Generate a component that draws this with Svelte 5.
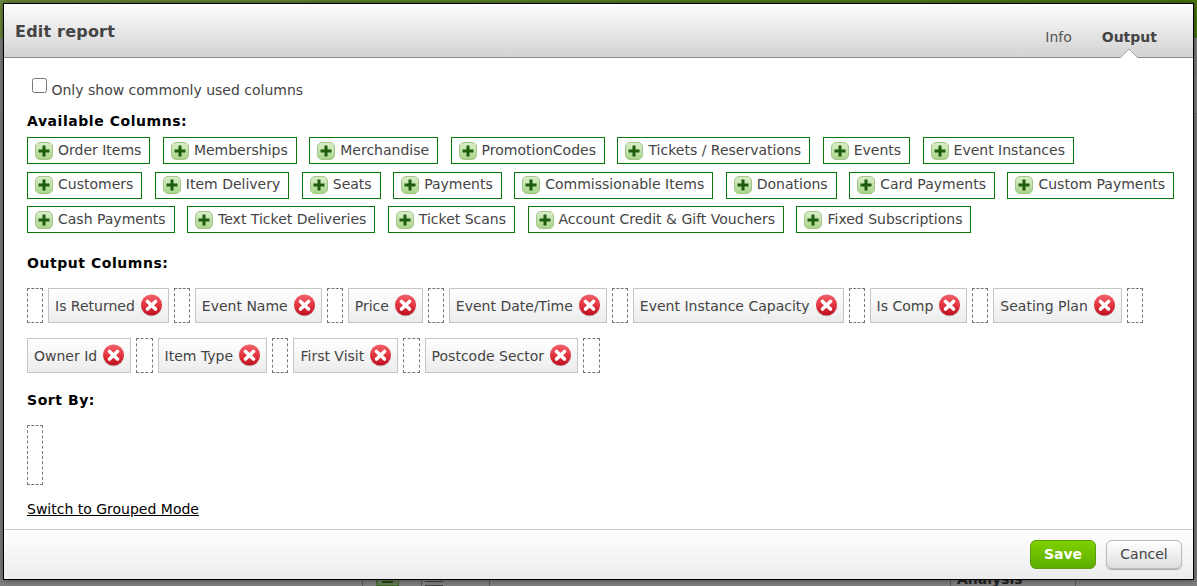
<script>
  const available = [
    ['Order Items', 'Memberships', 'Merchandise', 'PromotionCodes', 'Tickets / Reservations', 'Events', 'Event Instances'],
    ['Customers', 'Item Delivery', 'Seats', 'Payments', 'Commissionable Items', 'Donations', 'Card Payments', 'Custom Payments'],
    ['Cash Payments', 'Text Ticket Deliveries', 'Ticket Scans', 'Account Credit & Gift Vouchers', 'Fixed Subscriptions']
  ];
  const output = [
    ['Is Returned', 'Event Name', 'Price', 'Event Date/Time', 'Event Instance Capacity', 'Is Comp', 'Seating Plan'],
    ['Owner Id', 'Item Type', 'First Visit', 'Postcode Sector']
  ];
</script>

<div class="page">
  <div class="backdrop">
    <div class="strip-plus"></div>
    <div class="strip-lines"></div>
    <div class="strip-rule a"></div>
    <div class="strip-rule b"></div>
    <div class="strip-rule c"></div>
    <div class="strip-rule d"></div>
    <div class="strip-rule e"></div>
    <span class="strip-text">Analysis</span>
  </div>
  <div class="modal">
    <header>
      <h1>Edit report</h1>
      <nav>
        <span class="tab">Info</span>
        <span class="tab active">Output</span>
      </nav>
      <svg class="caret" width="20" height="10" viewBox="0 0 20 10"><path d="M1 10 L10 1 L19 10" fill="#fff" stroke="#a8a8a8" stroke-width="1"/></svg>
    </header>
    <main>
      <label class="check"><input type="checkbox" /> Only show commonly used columns</label>
      <h2 class="first">Available Columns:</h2>
      <div class="avail">
        {#each available as row}
          <div class="row">
            {#each row as name}
              <span class="add">
                <svg width="18" height="18" viewBox="0 0 18 18">
                  <defs><linearGradient id="gg" x1="0" y1="0" x2="0" y2="1"><stop offset="0" stop-color="#dcefcb"/><stop offset="1" stop-color="#a9d488"/></linearGradient></defs>
                  <rect x="0.5" y="0.5" width="17" height="17" rx="4.5" fill="url(#gg)" stroke="#a3c48c"/>
                  <path d="M9 3.5v11M3.5 9h11" stroke="#1c5c0c" stroke-width="3"/>
                </svg><span class="label">{name}</span>
              </span>
            {/each}
          </div>
        {/each}
      </div>
      <h2 class="second">Output Columns:</h2>
      <div class="outs">
        {#each output as row}
          <div class="out-row" class:long={row.length === 7}>
            {#each row as name, i}
              {#if row.length === 7 && i === 0}<span class="drop"></span>{/if}
              <span class="col">{name}
                <svg width="23" height="23" viewBox="0 0 23 23">
                  <defs>
                    <linearGradient id="rg" x1="0" y1="0" x2="0" y2="1"><stop offset="0" stop-color="#f4626c"/><stop offset="0.55" stop-color="#e0303c"/><stop offset="1" stop-color="#bd0f1e"/></linearGradient>
                  </defs>
                  <circle cx="11.5" cy="12" r="10.5" fill="#000" opacity=".15"/>
                  <circle cx="11.5" cy="11" r="10.5" fill="url(#rg)"/>
                  <path d="M7.5 7.5l8 7.5M15.5 7.5l-8 7.5" stroke="#fff" stroke-width="3.6" stroke-linecap="round"/>
                </svg>
              </span>
              <span class="drop"></span>
            {/each}
          </div>
        {/each}
      </div>
      <h2 class="third">Sort By:</h2>
      <div class="sort"></div>
      <a href="#switch" class="switch">Switch to Grouped Mode</a>
    </main>
    <footer>
      <button class="save">Save</button>
      <button class="cancel">Cancel</button>
    </footer>
  </div>
</div>

<style>
  :global(body) { margin: 0; }
  .page {
    width: 1197px; height: 586px; box-sizing: border-box; position: relative; overflow: hidden;
    padding: 3px 3px 6px 3px;
    font-family: "DejaVu Sans", Verdana, sans-serif; font-size: 14px; color: #333;
    background:
      linear-gradient(#808080 0, #808080 37px, #707070 37px, #858585 38px, #858585 75px, #666 75px, #7f7f7f 76px) 0 38px / 100% 100% no-repeat,
      linear-gradient(to right, #6a8a3c, #4c7510);
  }
  .backdrop { position: absolute; left: 0; right: 0; bottom: 0; height: 7px; background: #7f7f7f; }
  .strip-plus { position: absolute; left: 376px; top: 0; width: 23px; height: 7px; background: #687a5c; border: 1px solid #3c6a20; border-top: 0; box-sizing: border-box; }
  .strip-plus::after { content: ""; position: absolute; left: 5px; top: 2px; width: 11px; height: 2px; background: #1f4a0c; }
  .strip-lines { position: absolute; left: 425px; top: 2px; width: 18px; height: 3px; border-top: 1px solid #444; border-bottom: 1px solid #444; }
  .strip-rule { position: absolute; top: 0; width: 1px; height: 7px; background: #5a5a5a; }
  .strip-rule.a { left: 362px; } .strip-rule.b { left: 421px; } .strip-rule.c { left: 489px; } .strip-rule.d { left: 950px; } .strip-rule.e { left: 1075px; }
  .strip-text { position: absolute; left: 957px; top: -8px; font-weight: bold; color: #222; font-size: 14px; }
  .modal {
    position: relative; height: 100%; box-sizing: border-box; border: 1px solid #000; background: #fff;
    display: flex; flex-direction: column;
    box-shadow: 0 0 6px rgba(0,0,0,.5);
  }
  header {
    height: 54px; flex: none; position: relative; box-sizing: border-box;
    background: linear-gradient(#fdfdfd, #d2d2d2);
    border-bottom: 1px solid #8a8a8a;
    display: flex; justify-content: space-between;
  }
  h1 { margin: 0; padding: 18px 0 0 11px; font-size: 16px; font-weight: bold; color: #444; line-height: 19px; letter-spacing: .2px; }
  nav { display: flex; gap: 30px; padding: 25px 36px 0 0; line-height: 17px; color: #555; }
  .tab.active { font-weight: bold; color: #444; }
  .caret { position: absolute; right: 54px; bottom: -1px; }
  main { flex: 1; padding: 20px 0 0 23px; min-height: 0; }
  .check { display: block; padding-left: 5px; line-height: 20px; color: #444; }
  .check input { margin: 0; width: 15px; height: 15px; vertical-align: 2px; }
  h2 { margin: 0; font-size: 14px; font-weight: bold; color: #000; line-height: 17px; letter-spacing: .55px; }
  .first { margin-top: 13px; }
  .avail { margin-top: 7px; display: flex; flex-direction: column; gap: 7.6px; }
  .row { display: flex; gap: 12.5px; }
  .add {
    display: inline-flex; align-items: center; height: 27px; box-sizing: border-box; padding: 0 8px 0 7px;
    border: 1px solid #0a7a0a; color: #444; white-space: nowrap;
  }
  .add svg { margin-right: 5px; }
  .label { padding-bottom: 2px; }
  .second { margin-top: 22px; }
  .outs { margin-top: 16px; display: flex; flex-direction: column; gap: 15px; }
  .out-row { display: flex; gap: 5px; align-items: stretch; height: 35px; }
  .col {
    display: inline-flex; align-items: center; gap: 5px; box-sizing: border-box; padding: 0 5px 0 6px; white-space: nowrap;
    border: 1px solid #c4c4c4; background: linear-gradient(#fff, #ececec); color: #444;
  }
  .drop { width: 16.4px; border: 1px dashed #777; box-sizing: border-box; }
  .long .drop { width: 16px; }
  .third { margin-top: 19px; }
  .sort { width: 16px; height: 60px; margin-top: 16px; border: 1px dashed #777; box-sizing: border-box; }
  .switch { display: inline-block; margin-top: 16px; color: #000; line-height: 17px; }
  footer {
    height: 50px; flex: none; box-sizing: border-box; border-top: 1px solid #ccc;
    background: linear-gradient(#fff, #ececec);
    display: flex; justify-content: flex-end; align-items: center; gap: 10px; padding: 0 11px 0 0;
  }
  button { font-family: inherit; font-size: 14px; height: 29px; border-radius: 6px; box-sizing: border-box; padding: 0 0 2px; }
  .save { width: 66px; font-weight: bold; color: #fff; border: 1px solid #5c9a10; background: linear-gradient(#7ed000, #5cae00); }
  .cancel { width: 76px; color: #444; border: 1px solid #bbb; background: linear-gradient(#fff, #dedede); box-shadow: 0 1px 1px rgba(0,0,0,.3); }
</style>
